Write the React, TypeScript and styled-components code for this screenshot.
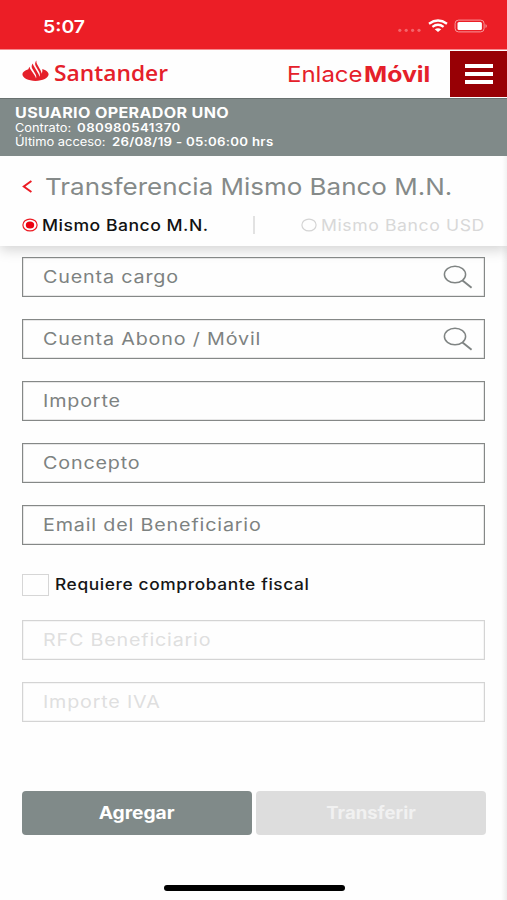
import React from "react";
import styled, { createGlobalStyle } from "styled-components";

const GlobalStyle = createGlobalStyle`
  * { box-sizing: border-box; }
  body { margin: 0; background: #fff; font-family: Inter, Roboto, sans-serif; }
`;

const Screen = styled.div`
  display: flex;
  flex-direction: column;
  width: 507px;
  height: 900px;
  overflow: hidden;
  background: #fefefe;
`;

const Wide = styled.span<{ $size: number; $x: number; $weight?: number; $gap?: number; $origin?: string }>`
  display: inline-block;
  white-space: pre;
  font-size: ${(p) => p.$size}px;
  font-weight: ${(p) => p.$weight ?? 400};
  letter-spacing: ${(p) => p.$gap ?? 0}px;
  transform: scaleX(${(p) => p.$x});
  transform-origin: ${(p) => p.$origin ?? "left"} center;
`;

const StatusBar = styled.div`
  display: flex;
  align-items: center;
  justify-content: space-between;
  height: 50px;
  padding: 3px 18px 0 43px;
  background: #ec1e26;
  border-bottom: 1px solid #f58a8e;
  color: #fff;
`;

const StatusIcons = styled.svg`
  width: 92px;
  height: 16px;
`;

const Header = styled.header`
  display: flex;
  justify-content: space-between;
  height: 48px;
  padding-left: 22px;
  background: #fefefe;
  color: #e5202a;
`;

const Brand = styled.div`
  display: flex;
  align-items: center;
  gap: 5px;
  height: 46px;
  font-family: "Open Sans", sans-serif;
`;

const Flame = styled.svg`
  width: 27px;
  height: 22px;
  margin-top: -4px;
`;

const HeaderRight = styled.div`
  display: flex;
  height: 47px;
`;

const Product = styled.div`
  display: grid;
  grid-template-columns: 77px 86px;
  align-items: center;
  line-height: 48px;
`;

const MenuButton = styled.button`
  display: flex;
  flex-direction: column;
  align-items: center;
  justify-content: center;
  gap: 4px;
  width: 57px;
  height: 46px;
  margin-top: 1px;
  padding: 0;
  border: 0;
  background: #980005;
`;

const MenuLine = styled.span`
  width: 28px;
  height: 4px;
  background: #fff;
`;

const UserPanel = styled.section`
  display: flex;
  flex-direction: column;
  height: 58px;
  padding: 5px 15px 0;
  background: #808a89;
  border-top: 1px solid #697170;
  color: #fff;
`;

const UserLine = styled.div<{ $height: number; $label?: number }>`
  display: grid;
  grid-template-columns: ${(p) => (p.$label ? `${p.$label}px 1fr` : "1fr")};
  justify-items: start;
  height: ${(p) => p.$height}px;
  line-height: ${(p) => p.$height}px;
`;

const Body = styled.main`
  display: flex;
  flex-direction: column;
  flex: 1;
  overflow: hidden;
  background: linear-gradient(to left, #ececec 0, #f6f6f6 3px, rgba(254, 254, 254, 0) 6px);
`;

const TitlePanel = styled.section`
  height: 90px;
  padding: 14px 22px 0;
  background: linear-gradient(to left, #f2f2f2 0, #fafafa 3px, #fefefe 5px);
  box-shadow: 0 4px 12px rgba(0, 0, 0, 0.17);
`;

const TitleRow = styled.div`
  display: flex;
  align-items: center;
  height: 32px;
  color: #858a89;
`;

const BackIcon = styled.svg`
  width: 11px;
  height: 15px;
  margin-right: 12px;
`;

const Tabs = styled.div`
  display: grid;
  grid-template-columns: 231px 48px 1fr;
  align-items: center;
  height: 20px;
  margin-top: 13px;
`;

const Tab = styled.label<{ $active?: boolean }>`
  display: flex;
  align-items: center;
  gap: 4px;
  color: ${(p) => (p.$active ? "#111" : "#d8d8d8")};
`;

const Divider = styled.span`
  width: 2px;
  height: 18px;
  background: #e2e2e2;
`;

const RadioMark = styled.svg`
  flex: none;
  width: 16px;
  height: 14px;
`;

const Form = styled.form`
  display: flex;
  flex-direction: column;
  gap: 22px;
  width: 463px;
  margin: 11px 0 0 22px;
`;

const Field = styled.div<{ $disabled?: boolean }>`
  display: flex;
  align-items: center;
  justify-content: space-between;
  height: 40px;
  padding: 0 11px 0 20px;
  border: 1px solid ${(p) => (p.$disabled ? "#d4d4d4" : "#858887")};
  box-shadow: inset 0 0 0 0.5px ${(p) => (p.$disabled ? "#ececec" : "#cfd0d0")};
  color: ${(p) => (p.$disabled ? "#dfdfdf" : "#7d8281")};
`;

const SearchIcon = styled.svg`
  width: 31px;
  height: 26px;
`;

const CheckRow = styled.label`
  display: flex;
  align-items: center;
  gap: 6px;
  height: 23px;
  margin: 6px 0 2px;
  color: #161616;
`;

const CheckBox = styled.span`
  width: 27px;
  height: 22px;
  border: 1px solid #d6d6d6;
`;

const Actions = styled.div`
  display: grid;
  grid-template-columns: 230px 230px;
  gap: 4px;
  margin: 68.5px 0 0 22px;
`;

const ActionButton = styled.button<{ $muted?: boolean }>`
  height: 44px;
  padding: 0;
  border: 0;
  border-radius: 4px;
  font-family: inherit;
  background: ${(p) => (p.$muted ? "#dddddd" : "#808a89")};
  color: ${(p) => (p.$muted ? "#f1f1f1" : "#fff")};
`;

const HomeIndicator = styled.div`
  width: 181px;
  height: 6px;
  margin: 50.5px 0 0 163.5px;
  border-radius: 3px;
  background: #000;
`;

const Magnifier = () => (
  <SearchIcon viewBox="0 0 31 26" fill="none" stroke="#7f8483" strokeWidth="1.5">
    <ellipse cx="13" cy="10.5" rx="10.6" ry="8.3" />
    <path d="M20.5 16.5 29.6 23.8" strokeWidth="1.9" />
  </SearchIcon>
);

const Radio = ({ on }: { on?: boolean }) => (
  <RadioMark viewBox="0 0 16 14" fill="none">
    <ellipse cx="8" cy="7" rx="7.1" ry="5.9" stroke={on ? "#ec1c24" : "#d4d4d4"} strokeWidth="1.2" />
    {on && <ellipse cx="8" cy="7" rx="4.2" ry="3.5" fill="#ec0010" />}
  </RadioMark>
);

const mainFields = [
  { label: "Cuenta cargo", search: true },
  { label: "Cuenta Abono / Móvil", search: true },
  { label: "Importe" },
  { label: "Concepto" },
  { label: "Email del Beneficiario" },
];

const taxFields = ["RFC Beneficiario", "Importe IVA"];

export default function App() {
  return (
    <>
      <GlobalStyle />
      <Screen>
        <StatusBar>
          <Wide $size={17.5} $weight={600} $x={1.11}>5:07</Wide>
          <StatusIcons viewBox="0 0 92 16" fill="none">
            <g fill="#f4656b">
              <circle cx="2.8" cy="12.3" r="1.6" />
              <circle cx="9.2" cy="12.3" r="1.6" />
              <circle cx="15.6" cy="12.3" r="1.6" />
              <circle cx="22" cy="12.3" r="1.6" />
            </g>
            <g stroke="#fff" strokeWidth="2.3">
              <path d="M32 5.7Q41 -0.7 50 5.7" />
              <path d="M35.4 8.9Q41 4.7 46.6 8.900" />
            </g>
            <path d="M37.7 11.2Q41 9.1 44.3 11.2L41 14Z" fill="#fff" />
            <rect x="58.1" y="2.1" width="29" height="11.8" rx="3.4" stroke="#f7979b" />
            <rect x="60.5" y="3.9" width="24.4" height="8.2" rx="1.6" fill="#fff" />
            <path d="M88.5 5.9Q91.1 8 88.5 10.1Z" fill="#f7979b" />
          </StatusIcons>
        </StatusBar>
        <Header>
          <Brand>
            <Flame viewBox="0 0 27 22" fill="#e5202a">
              <path d="M6.4 9.2C2.7 10.3.4 12.2.4 14.3c0 3.7 5.9 6.6 13.1 6.6s13.1-2.9 13.1-6.6c0-2.3-2.6-4.3-6.3-5.3.2 2.1-.1 3.6-.7 4.7-.1-1.2-.5-2.3-1.1-3.4L15 3.9C14.4 2.9 14.2 1.7 14.4.6c-1.4 1.7-1.7 3.6-.7 5.3l3.3 5.8c1.1 1.9 1.1 3.7.4 5.1-.1-1-.4-2-.9-2.9L11.5 5.4c-.4-.7-.6-1.3-.7-2-1.3 1.6-1.5 3.5-.6 5.1l3.2 5.5c1 1.8 1.1 3.2.6 4.4-.2-.9-.6-1.8-1.1-2.7L8.6 9.6c-.6-1-.9-1.9-.9-2.9-.8.8-1.2 1.6-1.3 2.5Z" />
            </Flame>
            <Wide $size={21} $weight={600} $x={1.085}>Santander</Wide>
          </Brand>
          <HeaderRight>
            <Product>
              <Wide $size={22} $x={1.09}>Enlace</Wide>
              <Wide $size={22} $weight={700} $x={1.13}>Móvil</Wide>
            </Product>
            <MenuButton aria-label="Menú">
              <MenuLine />
              <MenuLine />
              <MenuLine />
            </MenuButton>
          </HeaderRight>
        </Header>
        <UserPanel>
          <UserLine $height={17}>
            <Wide $size={14} $weight={700} $x={1.15} $gap={0.3}>USUARIO OPERADOR UNO</Wide>
          </UserLine>
          <UserLine $height={15} $label={62}>
            <Wide $size={11.5} $x={1.11}>Contrato:</Wide>
            <Wide $size={11.5} $weight={600} $x={1.15} $gap={0.38}>080980541370</Wide>
          </UserLine>
          <UserLine $height={12} $label={97}>
            <Wide $size={11.5} $x={1.12}>Último acceso:</Wide>
            <Wide $size={11.5} $weight={600} $x={1.15} $gap={0.25}>26/08/19 - 05:06:00 hrs</Wide>
          </UserLine>
        </UserPanel>
        <Body>
          <TitlePanel>
            <TitleRow>
              <BackIcon viewBox="0 0 11 15" fill="none" stroke="#ec1c24" strokeWidth="2">
                <path d="M9.4 2 1.8 7.5 9.4 13" />
              </BackIcon>
              <Wide $size={23.5} $x={1.105}>Transferencia Mismo Banco M.N.</Wide>
            </TitleRow>
            <Tabs>
              <Tab $active>
                <Radio on />
                <Wide $size={16} $weight={500} $x={1.1} $gap={0.45}>Mismo Banco M.N.</Wide>
              </Tab>
              <Divider />
              <Tab>
                <Radio />
                <Wide $size={16} $x={1.1} $gap={0.55}>Mismo Banco USD</Wide>
              </Tab>
            </Tabs>
          </TitlePanel>
          <Form>
            {mainFields.map((f) => (
              <Field key={f.label}>
                <Wide $size={17} $x={1.16} $gap={0.72}>{f.label}</Wide>
                {f.search && <Magnifier />}
              </Field>
            ))}
            <CheckRow>
              <CheckBox />
              <Wide $size={15.5} $weight={500} $x={1.12} $gap={0.54}>Requiere comprobante fiscal</Wide>
            </CheckRow>
            {taxFields.map((label) => (
              <Field key={label} $disabled>
                <Wide $size={17} $x={1.16} $gap={0.7}>{label}</Wide>
              </Field>
            ))}
          </Form>
          <Actions>
            <ActionButton>
              <Wide $size={17} $weight={700} $x={1.13} $origin="center">Agregar</Wide>
            </ActionButton>
            <ActionButton $muted>
              <Wide $size={17} $weight={700} $x={1.09} $origin="center">Transferir</Wide>
            </ActionButton>
          </Actions>
          <HomeIndicator />
        </Body>
      </Screen>
    </>
  );
}
